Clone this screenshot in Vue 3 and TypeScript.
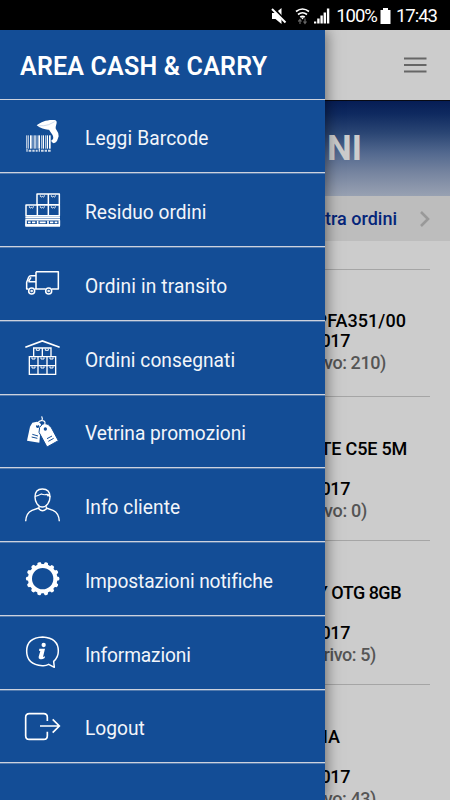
<script setup lang="ts">
interface MenuItem {
  icon: string
  label: string
  box: string
  spacing: number
}

interface OrderLine {
  text: string
  right: number
  kind: 'strong' | 'muted' | 'blank'
  spacing: number
}

const menu: MenuItem[] = [
  { icon: 'scanner', label: 'Leggi Barcode', box: '72 54 108 108', spacing: 0.14 },
  { icon: 'pallet', label: 'Residuo ordini', box: '72 54 108 108', spacing: 0 },
  { icon: 'truck', label: 'Ordini in transito', box: '72 54 108 108', spacing: 0.15 },
  { icon: 'warehouse', label: 'Ordini consegnati', box: '72 273 108 108', spacing: 0.06 },
  { icon: 'tags', label: 'Vetrina promozioni', box: '72 54 108 108', spacing: 0 },
  { icon: 'person', label: 'Info cliente', box: '72 275 108 108', spacing: 0.05 },
  { icon: 'gear', label: 'Impostazioni notifiche', box: '72 54 108 108', spacing: -0.1 },
  { icon: 'info', label: 'Informazioni', box: '72 276 108 108', spacing: -0.15 },
  { icon: 'logout', label: 'Logout', box: '72 54 108 108', spacing: 0 },
]

const orders: OrderLine[][] = [
  [
    { text: 'PFA351/00', right: 24, kind: 'strong', spacing: 0.05 },
    { text: '017', right: 80, kind: 'strong', spacing: -0.4 },
    { text: 'vo: 210)', right: 44, kind: 'muted', spacing: -0.4 },
  ],
  [
    { text: 'TE C5E 5M', right: 23, kind: 'strong', spacing: -0.2 },
    { text: '', right: 0, kind: 'blank', spacing: 0 },
    { text: '017', right: 80, kind: 'strong', spacing: -0.4 },
    { text: 'vo: 0)', right: 63, kind: 'muted', spacing: -0.3 },
  ],
  [
    { text: 'Y OTG 8GB', right: 29, kind: 'strong', spacing: -0.5 },
    { text: '', right: 0, kind: 'blank', spacing: 0 },
    { text: '017', right: 80, kind: 'strong', spacing: -0.4 },
    { text: 'rivo: 5)', right: 54, kind: 'muted', spacing: -0.4 },
  ],
  [
    { text: 'IA', right: 90, kind: 'strong', spacing: 0 },
    { text: '', right: 0, kind: 'blank', spacing: 0 },
    { text: '017', right: 80, kind: 'strong', spacing: -0.4 },
    { text: 'vo: 43)', right: 54, kind: 'muted', spacing: -0.4 },
  ],
]

const bars = [
  [79, 3], [85, 2], [90, 5], [98, 2], [103, 4], [110, 2], [115, 5], [123, 2],
  [128, 4], [135, 2], [140, 4], [147, 5],
]
const teeth = Array.from({ length: 14 }, (_, i) => (i * 360) / 14 + 13)
</script>

<template>
  <div class="screen">
    <header class="status">
      <svg class="status-icons" viewBox="0 0 60 20" width="60" height="20">
        <path d="M1 7h3.500l6-5v16l-6-5H1z" fill="#fff" />
        <path d="M1.500 1l13 15" stroke="#000" stroke-width="3" />
        <path d="M1 3l13.500 13.500" stroke="#fff" stroke-width="2" />
        <g fill="none" stroke="#fff" stroke-width="1.700">
          <path d="M25 5.500q6.500-5 13 0M27 8.500q4.500-3.500 9 0M29.200 11.200q2.300-1.800 4.600 0" />
        </g>
        <path d="M30 11.500h3l-1.500 2z" fill="#fff" />
        <path d="M29 13v5M27.300 15.500L29 13.500l1.500 2M34 12.500v5M32.500 15.500l1.500 2 1.500-2" fill="none" stroke="#666" stroke-width="1.200" />
        <path d="M43 17.500v-2h2.300v2zM46.200 17.500v-5h2.400v5zM49.400 17.500v-8h2.400v8zM52.600 17.500v-11H55v11zM55.900 17.500v-15h2.400v15z" fill="#fff" />
      </svg>
      <span class="percent">100%</span>
      <svg class="battery" viewBox="0 0 11 16" width="11" height="16">
        <path d="M3 0h5v2h2.500v14H.5V2H3z" fill="#fff" />
      </svg>
      <span class="clock">17:43</span>
    </header>

    <main class="page">
      <div class="appbar">
        <svg viewBox="0 0 23 16" width="23" height="16">
          <path d="M0 1.500h22.500M0 8h22.500M0 14.500h22.500" stroke="#666" stroke-width="2" />
        </svg>
      </div>
      <div class="hero"><h1>NI</h1></div>
      <div class="filter">
        <span>tra ordini</span>
        <svg viewBox="0 0 12 18" width="12" height="18">
          <path d="M2 2l7 7-7 7" fill="none" stroke="#999" stroke-width="2.600" />
        </svg>
      </div>
      <div class="list">
        <section v-for="(order, i) in orders" :key="i" class="order">
          <p
            v-for="(line, j) in order"
            :key="j"
            :class="line.kind"
            :style="{ paddingRight: line.right + 'px', letterSpacing: line.spacing + 'px' }"
          >{{ line.text }}</p>
        </section>
      </div>
    </main>

    <nav class="drawer">
      <h2>AREA CASH &amp; CARRY</h2>
      <ul>
        <li v-for="item in menu" :key="item.label">
          <svg :viewBox="item.box" width="36" height="36" class="icon">
            <g v-if="item.icon === 'scanner'" fill="#fff">
              <rect v-for="b in bars" :key="b[0]" :x="b[0]" y="106" :width="b[1]" height="40" />
              <path d="M79 147h4v8h-4zM86 149h8v6h-8zM97 149h7v6h-7zM107 149h6v6h-6zM116 147h4v8h-4zM123 149h8v6h-8zM134 149h7v6h-7zM144 149h8v6h-8z" opacity=".8" />
              <path d="M110 76C123 65 143 58 163 60q8 1 7 9l-3 12q-1 5 3 10 7 9 6 18l-5 14q-4 6-10 7l-6-4-1-5 5-3q3-10-6-20l-6-9q-18 1-37-13z" />
              <path d="M116 77q16 2 30-3l18-9" fill="none" stroke="#9eb6d8" stroke-width="1.500" />
            </g>
            <g v-else-if="item.icon === 'pallet'" fill="none" stroke="#fff" stroke-width="4.500">
              <path d="M111 60h67v32h-67zM145 60v32M78 93h100v32H78zM112 93v32M145 93v32" stroke-linejoin="round" />
              <path d="M121 64v3q3 4 6 0 4 4 6 0v-3M154 64v3q3 4 6 0 4 4 6 0v-3M88 97v3q3 4 6 0 4 4 6 0v-3M121 97v3q3 4 6 0 4 4 6 0v-3M154 97v3q3 4 6 0 4 4 6 0v-3" stroke-width="3" />
              <path d="M76 130h104M76 137h104" stroke-width="5" />
              <path d="M76 154h104" stroke-width="8" />
              <path d="M78 139v16M178 139v16M113 140v14M144 140v14M84 145h8M96 145h10M119 145h18M150 145h10M164 145h8" stroke-width="5" />
            </g>
            <g v-else-if="item.icon === 'truck'" fill="none" stroke="#fff" stroke-width="4.600" stroke-linejoin="round">
              <path d="M108 74h67v52h-19M137 126h-32M108 74v51M108 86H93q-5 0-7 5l-6 15v20h5M85 104h21M93 91l-7 12" />
              <circle cx="95" cy="132" r="9" /><circle cx="146" cy="132" r="9" />
              <circle cx="95" cy="132" r="1.500" /><circle cx="146" cy="132" r="1.500" />
            </g>
            <g v-else-if="item.icon === 'warehouse'" fill="none" stroke="#fff" stroke-width="4">
              <path d="M76 298l51-19 52 19" stroke-width="5" />
              <path d="M101 300h52v26h-52zM127 300v26M88 326h79v27H88zM114 326v53M141 326v53M88 353h79v26H88z" />
              <path d="M109 302v5h9v-5M136 302v5h9v-5M96 328v5h9v-5M123 328v5h9v-5M150 328v5h9v-5M96 355v5h9v-5M123 355v5h9v-5M150 355v5h9v-5" stroke-width="3" />
            </g>
            <g v-else-if="item.icon === 'tags'">
              <path d="M97 83l14-3q8 1 12 8l-5 55-37-6 9-42z" fill="#fff" />
              <path d="M119 97l8-9q9-4 17 0l10 10 21 39-34 19-24-44z" fill="#fff" stroke="#134d96" stroke-width="3" />
              <circle cx="113" cy="94" r="5" fill="#134d96" />
              <circle cx="136" cy="102" r="5" fill="#134d96" />
              <path d="M97 118l17 5M95 126l17 4M141 131l15-8M145 139l16-9" stroke="#134d96" stroke-width="3" />
              <path d="M113 92q-2-12 11-15 3-2 3-6l-2-7M127 77q9 1 8 8 0 3-4 4" fill="none" stroke="#fff" stroke-width="3.500" />
            </g>
            <g v-else-if="item.icon === 'person'" fill="none" stroke="#fff" stroke-width="4.200">
              <path d="M127 281q-22 0-22 24c0 15 9 30 22 30s23-15 23-30q0-24-23-24z" />
              <path d="M105 303q9-2 19-7 9 4 17 1 8 1 9 8M141 297l4 6" stroke-width="3.500" />
              <path d="M117 333v8q10 10 22 0v-8M116 338l-20 7q-18 8-19 33M139 338l20 7q18 8 19 33" />
            </g>
            <g v-else-if="item.icon === 'gear'" fill="#fff">
              <circle cx="128" cy="110" r="38" fill="none" stroke="#fff" stroke-width="12" />
              <path v-for="t in teeth" :key="t" d="M120 73l3-12q5-3 10 0l3 12z" :transform="`rotate(${t} 128 110)`" />
            </g>
            <g v-else-if="item.icon === 'info'" fill="none" stroke="#fff" stroke-width="4.500">
              <path d="M146 367q-9 5-19 4-47-3-47-44 0-40 48-42 47 3 47 42 0 19-14 31l2 18-17-9z" stroke-linejoin="round" />
              <circle cx="131" cy="309" r="6.500" fill="#fff" stroke="none" />
              <path d="M118 320h17l-6 25 6-2-1 5q-7 5-15 3-4-2-3-7l5-17-4-1z" fill="#fff" stroke="none" />
            </g>
            <g v-else fill="none" stroke="#fff" stroke-width="5">
              <path d="M142 93V82q0-11-11-11H88q-11 0-11 11v55q0 11 11 11h43q11 0 11-11v-12M120 108h58M158 88l20 20-20 20" />
            </g>
          </svg>
          <span :style="{ letterSpacing: item.spacing + 'px' }">{{ item.label }}</span>
        </li>
      </ul>
    </nav>
  </div>
</template>

<style>
body {
  margin: 0;
}
</style>

<style scoped>
.screen {
  position: relative;
  width: 450px;
  height: 800px;
  overflow: hidden;
  background: #ccc;
  font-family: Roboto, "Liberation Sans", sans-serif;
}
h1,
h2,
p,
ul {
  margin: 0;
  padding: 0;
}
.status {
  box-sizing: border-box;
  height: 30px;
  padding: 1px 13px 0 0;
  display: flex;
  align-items: center;
  justify-content: flex-end;
  background: #000;
  color: #fff;
  font-size: 18.500px;
}
.status-icons {
  margin-right: 5px;
}
.percent {
  letter-spacing: -1px;
}
.battery {
  margin: 0 5px 0 3px;
}
.clock {
  letter-spacing: -1px;
}
.appbar {
  box-sizing: border-box;
  height: 71px;
  padding-right: 23px;
  display: flex;
  align-items: center;
  justify-content: flex-end;
  background: #ccc;
  border-bottom: 1px solid #080a14;
}
.hero {
  box-sizing: border-box;
  height: 95px;
  padding-right: 88px;
  display: flex;
  align-items: center;
  justify-content: flex-end;
  background: linear-gradient(180deg, #061d55 0%, #0f2a60 14%, #2b4674 34%, #53698f 55%, #7785a0 76%, #98a1b2 100%);
}
h1 {
  color: #ccc;
  font-size: 35px;
  line-height: 40px;
  font-weight: 700;
}
.filter {
  height: 45px;
  padding-right: 19px;
  display: flex;
  align-items: center;
  justify-content: flex-end;
  gap: 22px;
  background: #bdbdbd;
  color: #05257a;
  font-size: 18px;
  font-weight: 500;
}
.list {
  padding: 28px 20px 0;
}
.order {
  padding: 42px 0 19px;
  border-top: 1px solid #a5a5a5;
}
.order:first-child {
  padding: 41px 0 23px;
}
.order p {
  height: 20px;
  line-height: 20px;
  font-size: 18px;
  font-weight: 500;
  text-align: right;
  white-space: nowrap;
  color: #000;
}
.order .muted {
  margin-top: 2px;
  color: #555;
}
.drawer {
  position: absolute;
  top: 30px;
  left: 0;
  width: 325px;
  height: 770px;
  background: #134d96;
  box-shadow: 1px 0 14px rgba(0, 0, 0, 0.5);
  clip-path: inset(0 -30px 0 0);
}
h2 {
  box-sizing: border-box;
  height: 69.500px;
  padding: 5px 0 0 20px;
  display: flex;
  align-items: center;
  border-bottom: 1px solid #ccd2de;
  color: #fff;
  font-size: 25px;
  font-weight: 600;
  letter-spacing: 0.2px;
  white-space: nowrap;
}
ul {
  list-style: none;
}
li {
  box-sizing: border-box;
  height: 73.750px;
  padding-left: 24px;
  display: flex;
  align-items: center;
  gap: 25px;
  border-bottom: 1px solid #ccd2de;
  box-shadow: 0 1px 0 rgba(204, 210, 222, 0.35);
  color: #f2f5fa;
  font-size: 21px;
  white-space: nowrap;
}
li span {
  padding-top: 5px;
  transform: scaleX(0.912);
  transform-origin: left center;
}
.icon {
  flex: none;
  overflow: visible;
}
</style>
